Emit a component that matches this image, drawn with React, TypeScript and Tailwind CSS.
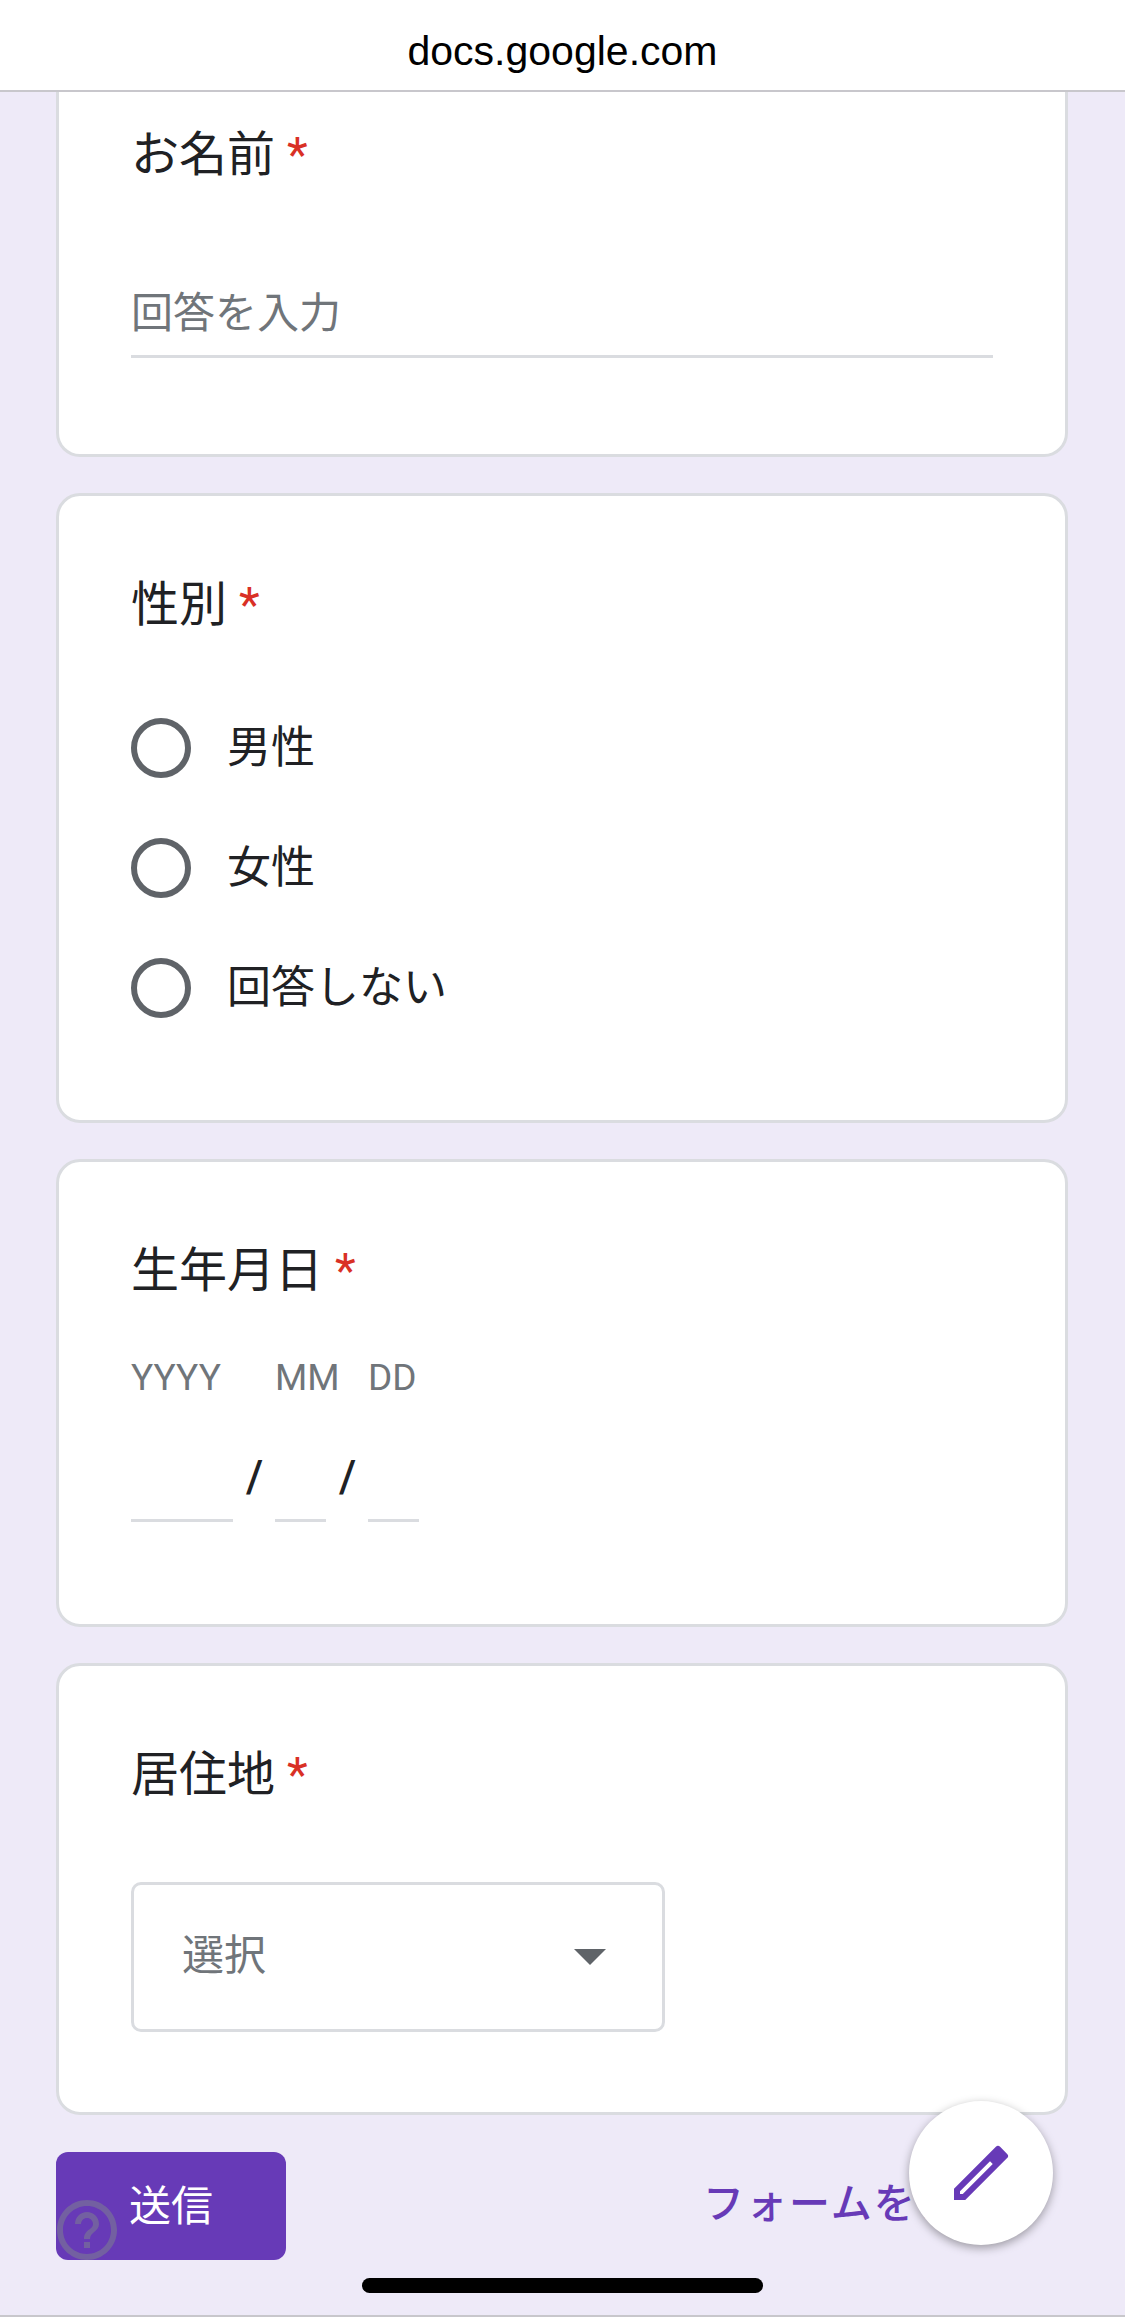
import React from 'react';

const FONT = 'font-["Roboto","Noto_Sans_CJK_JP",sans-serif]';

const Title = ({ text }: { text: string }) => (
  <div className="flex items-start text-[48px] leading-[60px] text-[#202124]">
    <span>{text}</span>
    <span className="ml-[12px] text-[#d93025]">*</span>
  </div>
);

const Card = ({ className, children }: { className: string; children: React.ReactNode }) => (
  <div className={`ml-[56px] mr-[57px] bg-white border-[3px] border-[#dadce0] rounded-[24px] px-[72px] ${className}`}>{children}</div>
);

const Radio = ({ label }: { label: string }) => (
  <div className="flex items-center h-[60px]">
    <div className="w-[60px] h-[60px] rounded-full border-[6px] border-[#5f6368]" />
    <span className="ml-[36px] text-[44px] leading-[60px] text-[#202124]">{label}</span>
  </div>
);

const DatePart = ({ label, width, gap }: { label: string; width: string; gap: string }) => (
  <div className={`${width} ${gap}`}>
    <div className="text-[37px] leading-[44px] text-[#70757a] whitespace-nowrap">{label}</div>
    <div className="mt-[119px] h-[3px] bg-[#dadce0]" />
  </div>
);

export default function App() {
  return (
    <div className={`relative w-[1125px] h-[2317px] overflow-hidden bg-[#eeeaf8] ${FONT}`}>
      <div className="relative z-10 h-[92px] pt-[11px] bg-white border-b-[2px] border-[#c8c7cc] flex items-center justify-center">
        <span className='font-["Liberation_Sans",sans-serif] text-[41px] leading-[60px] text-black'>docs.google.com</span>
      </div>

      <Card className="h-[365px] rounded-t-none border-t-0 pt-[33px]">
        <Title text="お名前" />
        <div className="mt-[99px] text-[42px] leading-[60px] text-[#70757a]">回答を入力</div>
        <div className="mt-[11px] h-[3px] bg-[#dadce0]" />
      </Card>

      <Card className="h-[630px] mt-[36px] pt-[79px]">
        <Title text="性別" />
        <div className="mt-[83px] flex flex-col gap-[60px]">
          <Radio label="男性" />
          <Radio label="女性" />
          <Radio label="回答しない" />
        </div>
      </Card>

      <Card className="h-[468px] mt-[36px] pt-[79px]">
        <Title text="生年月日" />
        <div className="mt-[55px] flex items-start relative">
          <DatePart label="YYYY" width="w-[102px]" gap="mr-[42px]" />
          <DatePart label="MM" width="w-[51px]" gap="mr-[42px]" />
          <DatePart label="DD" width="w-[51px]" gap="" />
          <span className="absolute left-[115px] top-[91px] text-[44px] font-medium leading-[60px] text-[#202124]">/</span>
          <span className="absolute left-[208px] top-[91px] text-[44px] font-medium leading-[60px] text-[#202124]">/</span>
        </div>
      </Card>

      <Card className="h-[452px] mt-[36px] pt-[79px]">
        <Title text="居住地" />
        <div className="mt-[77px] w-[534px] h-[150px] rounded-[10px] border-[3px] border-[#dadce0] flex items-center justify-between pl-[48px] pr-[56px]">
          <span className="mb-[4px] text-[42px] text-[#70757a]">選択</span>
          <div className="w-0 h-0 border-l-[16px] border-r-[16px] border-t-[16px] border-l-transparent border-r-transparent border-t-[#5f6368]" />
        </div>
      </Card>

      <div className="ml-[56px] mr-[57px] mt-[37px] flex items-start justify-between">
        <div className="w-[230px] h-[108px] rounded-[12px] bg-[#673ab7] flex items-center justify-center text-[42px] text-white">送信</div>
        <div className="mt-[22px] w-[365px] whitespace-nowrap text-[41px] tracking-[2px] font-medium leading-[60px] text-[#673ab7]">フォームをクリア</div>
      </div>

      <svg className="absolute left-[51px] top-[2194px]" width="72" height="72" viewBox="0 0 24 24" fill="#80868b" fillOpacity="0.5">
        <path d="M11 18h2v-2h-2v2zm1-16C6.48 2 2 6.48 2 12s4.48 10 10 10 10-4.48 10-10S17.52 2 12 2zm0 18c-4.41 0-8-3.59-8-8s3.59-8 8-8 8 3.59 8 8-3.59 8-8 8zm0-14c-2.21 0-4 1.79-4 4h2c0-1.1.9-2 2-2s2 .9 2 2c0 2-3 1.75-3 5h2c0-2.25 3-2.5 3-5 0-2.21-1.79-4-4-4z" />
      </svg>

      <div className="absolute left-[909px] top-[2101px] w-[144px] h-[144px] rounded-full bg-white shadow-[0_3px_10px_rgba(0,0,0,0.35)] flex items-center justify-center">
        <svg width="72" height="72" viewBox="0 0 24 24" fill="#673ab7" fillRule="evenodd">
          <path d="M3 17.25V21h3.75L20.71 7.04a1 1 0 0 0 0-1.41l-2.34-2.34a1 1 0 0 0-1.41 0L3 17.25zM5.92 19H5v-.92l10-10 .92.92L5.92 19z" />
        </svg>
      </div>

      <div className="absolute left-[362px] top-[2278px] w-[401px] h-[15px] rounded-full bg-black" />
      <div className="absolute left-0 top-[2315px] w-full h-[2px] bg-[#c8c7cc]" />
    </div>
  );
}
